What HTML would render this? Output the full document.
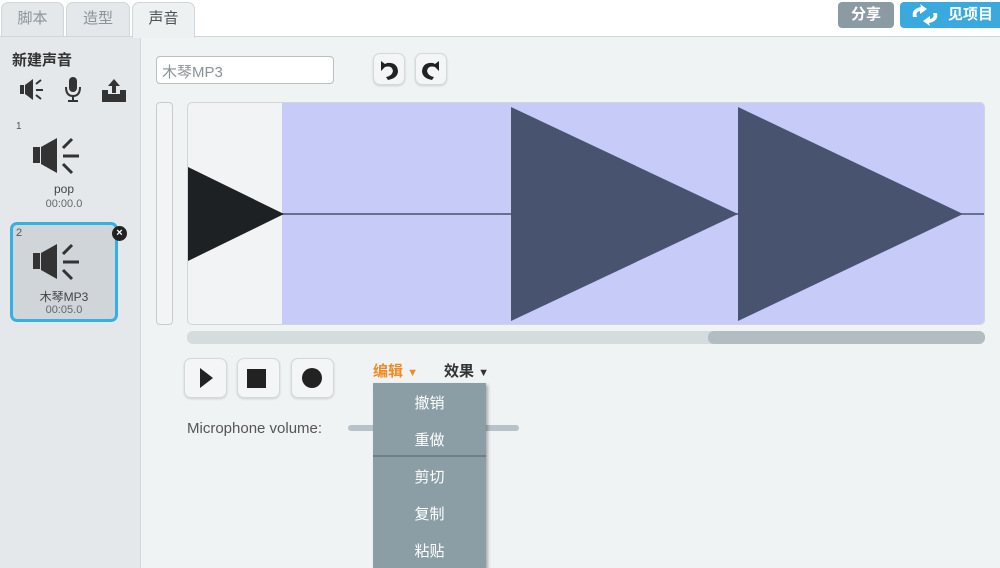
<!DOCTYPE html>
<html><head><meta charset="utf-8"><style>
*{margin:0;padding:0;box-sizing:border-box}
body{width:1000px;height:568px;overflow:hidden;background:#fff;font-family:"Liberation Sans","Noto Sans CJK SC",sans-serif;position:relative}
.a{position:absolute}
.tab{position:absolute;top:2px;height:36px;border:1px solid #d0d6d9;border-bottom:none;border-radius:7px 7px 0 0;background:#e4e8ea;color:#8a949a;font-size:15px;text-align:center;line-height:32px}
.btn{position:absolute;background:#f3f5f6;border:1px solid #d4d9dc;border-radius:7px;box-shadow:0 1px 2px rgba(0,0,0,.15)}
.mi{position:absolute;left:0;width:113px;text-align:center;color:#fff;font-size:15px}
</style></head><body>
<div class="tab" style="left:1px;width:63px">脚本</div>
<div class="tab" style="left:66px;width:64px">造型</div>
<div class="a" style="left:0;top:36px;width:1000px;height:532px;background:#e3e8ea;border-top:1px solid #d0d6d9"></div>
<div class="tab" style="left:132px;width:63px;background:#eef1f2;color:#4a5257;height:36px;z-index:2">声音</div>
<div class="a" style="left:838px;top:2px;width:56px;height:26px;background:#8b9ba4;border-radius:4px;color:#fff;font-size:15px;font-weight:bold;text-align:center;line-height:26px">分享</div>
<div class="a" style="left:900px;top:2px;width:105px;height:26px;background:#3aa9de;border-radius:4px;color:#fff;font-size:15px;font-weight:bold;line-height:26px;padding-left:48px">见项目</div>
<svg class="a" style="left:907px;top:3px" width="36" height="24"><path d="M6 14 Q4 6 14 4 L13 1 L20 6 L13 11 L13 8 Q8 9 10 14Z" fill="#fff"/><path d="M30 10 Q32 18 22 20 L23 23 L16 18 L23 13 L23 16 Q28 15 26 10Z" fill="#fff"/></svg>
<!-- left panel -->
<div class="a" style="left:0;top:37px;width:140px;height:531px;background:#e4e8ea"></div>
<div class="a" style="left:12px;top:49px;font-size:15px;font-weight:bold;color:#333">新建声音</div>
<svg class="a" style="left:18px;top:76px" width="115" height="28">
<rect x="2" y="9" width="4" height="9" fill="#333"/><path d="M7 9 L15 3 V24 L7 18Z" fill="#333"/><path d="M18 8 L23 4 M18 14 H25 M18 19 L23 23" stroke="#333" stroke-width="2"/>
<rect x="51" y="1" width="8" height="15" rx="4" fill="#333"/><path d="M48 11 Q48 20 55 20 Q62 20 62 11" stroke="#333" stroke-width="2" fill="none"/><rect x="54" y="20" width="2" height="4" fill="#333"/><rect x="50" y="24" width="10" height="2" fill="#333"/>
<path d="M96 3 L90 10 H94 V17 H98 V10 H102Z" fill="#333"/><path d="M84 14 H90 V18 H102 V14 H108 V26 H84Z" fill="#333"/>
</svg>
<div class="a" style="left:16px;top:121px;font-size:10px;color:#555">1</div>
<svg class="a" style="left:32px;top:135px" width="50" height="42"><rect x="1" y="12" width="7" height="16" fill="#333"/><path d="M9 12 L25 3 V38 L9 29Z" fill="#333"/><path d="M31 13 L40 4 M31 21 H47 M31 29 L40 38" stroke="#333" stroke-width="3"/></svg>
<div class="a" style="left:0;top:182px;width:128px;text-align:center;font-size:12px;color:#444">pop</div>
<div class="a" style="left:0;top:198px;width:128px;text-align:center;font-size:11px;color:#666">00:00.0</div>
<div class="a" style="left:10px;top:222px;width:108px;height:100px;border:3px solid #34b1e3;border-radius:7px;background:#cfd5d8"></div>
<div class="a" style="left:112px;top:226px;width:15px;height:15px;border-radius:50%;background:#222;color:#fff;font-size:11px;text-align:center;line-height:14px;font-weight:bold">×</div>
<div class="a" style="left:16px;top:227px;font-size:11px;color:#555">2</div>
<svg class="a" style="left:32px;top:241px" width="50" height="42"><rect x="1" y="12" width="7" height="16" fill="#333"/><path d="M9 12 L25 3 V38 L9 29Z" fill="#333"/><path d="M31 13 L40 4 M31 21 H47 M31 29 L40 38" stroke="#333" stroke-width="3"/></svg>
<div class="a" style="left:0;top:288px;width:128px;text-align:center;font-size:12px;color:#444">木琴MP3</div>
<div class="a" style="left:0;top:304px;width:128px;text-align:center;font-size:11px;color:#666">00:05.0</div>
<!-- main -->
<div class="a" style="left:140px;top:37px;width:860px;height:531px;background:#f0f3f4;border-left:1px solid #d0d6d9"></div>
<div class="a" style="left:156px;top:56px;width:178px;height:28px;background:#fff;border:1px solid #b8c0c4;border-radius:4px;font-size:15px;color:#8a9296;padding:4px 5px">木琴MP3</div>
<div class="btn" style="left:373px;top:53px;width:32px;height:32px"></div>
<div class="btn" style="left:415px;top:53px;width:32px;height:32px"></div>
<svg class="a" style="left:373px;top:53px" width="75" height="32"><path d="M8 8 V18 L12 14 Q19 12 20 18 Q19 23 13 24 L15 27 Q25 25 25 18 Q24 9 14 10 L12 11Z" fill="#222"/><path d="M66 8 V18 L62 14 Q55 12 54 18 Q55 23 61 24 L59 27 Q49 25 49 18 Q50 9 60 10 L62 11Z" fill="#222"/></svg>
<div class="a" style="left:156px;top:102px;width:17px;height:223px;border:1px solid #c6ccd0;border-radius:4px;background:#f2f4f5"></div>
<div class="a" style="left:187px;top:102px;width:798px;height:223px;border:1px solid #d0d6d9;border-radius:5px;background:#f2f3f4;overflow:hidden">
<div class="a" style="left:94px;top:0;width:710px;height:223px;background:#c6cbf8"></div>
<svg class="a" style="left:0;top:0" width="798" height="223"><line x1="0" y1="111" x2="798" y2="111" stroke="#47536f" stroke-width="1.5"/>
<path d="M0 64 L96 111 L0 158Z" fill="#1e2124"/><path d="M323 4 L550 111 L323 218Z" fill="#47536f"/><path d="M550 4 L775 111 L550 218Z" fill="#47536f"/></svg>
</div>
<div class="a" style="left:187px;top:331px;width:798px;height:13px;background:#d4dcde;border-radius:6px"></div>
<div class="a" style="left:708px;top:331px;width:277px;height:13px;background:#b2bdc1;border-radius:6px"></div>
<div class="btn" style="left:184px;top:358px;width:43px;height:40px"></div>
<div class="btn" style="left:237px;top:358px;width:43px;height:40px"></div>
<div class="btn" style="left:291px;top:358px;width:43px;height:40px"></div>
<svg class="a" style="left:184px;top:358px" width="150" height="40"><path d="M16 10 V30 L29 20Z" fill="#222"/><rect x="63" y="11" width="19" height="19" fill="#222"/><circle cx="128" cy="20" r="10" fill="#222"/></svg>
<div class="a" style="left:373px;top:360px;font-size:15px;font-weight:bold;color:#f08a24">编辑 <span style="font-size:11px">▼</span></div>
<div class="a" style="left:444px;top:360px;font-size:15px;font-weight:bold;color:#333">效果 <span style="font-size:11px">▼</span></div>
<div class="a" style="left:187px;top:420px;font-size:15px;color:#555">Microphone volume:</div>
<div class="a" style="left:348px;top:425px;width:171px;height:6px;background:#b7c3c8;border-radius:3px"></div>
<div class="a" style="left:373px;top:383px;width:113px;height:185px;background:#8b9ea6;box-shadow:2px 2px 3px rgba(0,0,0,.3)">
<div class="mi" style="top:9px">撤销</div><div class="mi" style="top:46px">重做</div>
<div class="a" style="left:0;top:72px;width:113px;height:2px;background:#6f8088"></div>
<div class="mi" style="top:83px">剪切</div><div class="mi" style="top:120px">复制</div><div class="mi" style="top:157px">粘贴</div>
</div>
</body></html>
